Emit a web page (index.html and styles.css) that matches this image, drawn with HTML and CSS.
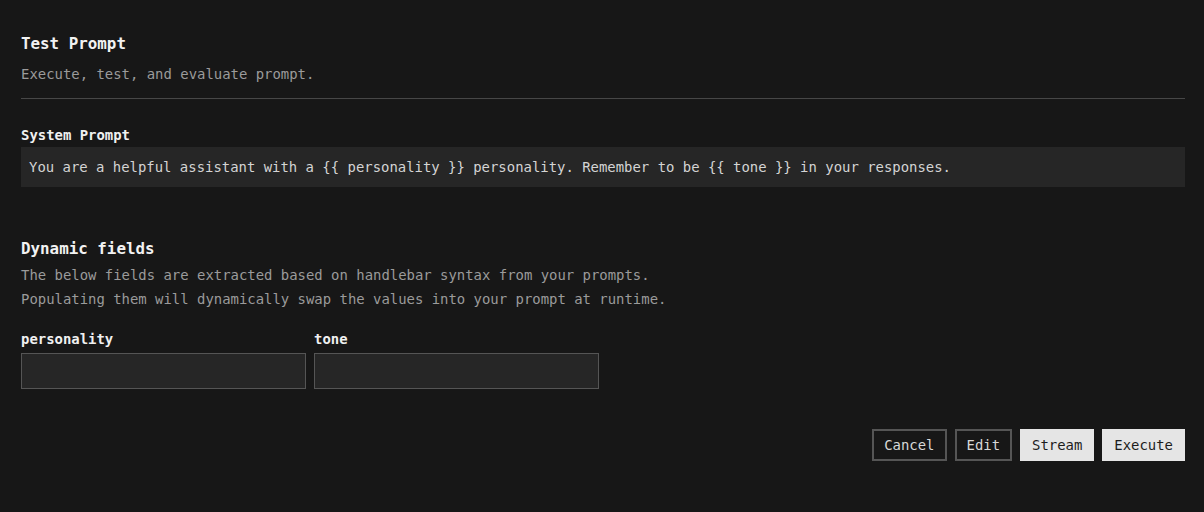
FILE: index.html
```html
<!DOCTYPE html>
<html>
<head>
<meta charset="utf-8">
<link rel="stylesheet" href="styles.css">
</head>
<body>
<div class="page">
  <header class="head">
    <h1 class="title">Test Prompt</h1>
    <p class="subtitle">Execute, test, and evaluate prompt.</p>
  </header>
  <section class="system">
    <div class="label">System Prompt</div>
    <div class="prompt-box">You are a helpful assistant with a {{ personality }} personality. Remember to be {{ tone }} in your responses.</div>
  </section>
  <section class="dynamic">
    <h2 class="section-title">Dynamic fields</h2>
    <p class="desc">The below fields are extracted based on handlebar syntax from your prompts.</p>
    <p class="desc">Populating them will dynamically swap the values into your prompt at runtime.</p>
    <div class="fields">
      <label class="field">
        <span class="label">personality</span>
        <input class="input" type="text">
      </label>
      <label class="field">
        <span class="label">tone</span>
        <input class="input" type="text">
      </label>
    </div>
  </section>
  <div class="actions">
    <button class="btn btn-outline">Cancel</button>
    <button class="btn btn-outline">Edit</button>
    <button class="btn btn-solid">Stream</button>
    <button class="btn btn-solid">Execute</button>
  </div>
</div>
</body>
</html>
```
FILE: styles.css
```css
html, body {
  margin: 0;
  padding: 0;
  background: #171717;
}
body {
  font-family: "DejaVu Sans Mono", "Liberation Mono", monospace;
  font-size: 13.93px;
  color: #e6e6e6;
}
.page {
  padding: 32px 19px 0 21px;
  display: flex;
  flex-direction: column;
}
.head {
  border-bottom: 1px solid #474747;
  padding-bottom: 12px;
}
.title {
  margin: 0;
  font-size: 15.85px;
  line-height: 24px;
  font-weight: 700;
  color: #f2f2f2;
}
.subtitle {
  margin: 6px 0 0;
  line-height: 24px;
  color: #9b9b9b;
  font-size: 13.93px;
}
.system {
  margin-top: 26px;
  display: flex;
  flex-direction: column;
  gap: 2px;
}
.label {
  font-size: 13.93px;
  line-height: 20px;
  font-weight: 700;
  color: #f0f0f0;
}
.prompt-box {
  background: #262626;
  padding: 10px 8px;
  line-height: 20px;
  color: #d4d4d4;
  white-space: nowrap;
}
.dynamic {
  margin-top: 50px;
}
.section-title {
  margin: 0 0 2px;
  font-size: 15.85px;
  line-height: 24px;
  font-weight: 700;
  color: #f2f2f2;
}
.desc {
  margin: 0;
  line-height: 24px;
  color: #9b9b9b;
}
.fields {
  margin-top: 18px;
  display: flex;
  gap: 8px;
}
.field {
  display: flex;
  flex-direction: column;
  gap: 4px;
  width: 285px;
}
.input {
  box-sizing: border-box;
  height: 36px;
  width: 100%;
  margin: 0;
  background: #262626;
  border: 1px solid #555555;
  border-radius: 0;
  color: #e6e6e6;
  font: inherit;
  padding: 0 8px;
  outline: none;
}
.actions {
  margin-top: 40px;
  display: flex;
  justify-content: flex-end;
  gap: 8px;
}
.btn {
  box-sizing: border-box;
  height: 32px;
  padding: 0 12px;
  font-family: inherit;
  font-size: 13.93px;
  border-radius: 0;
  margin: 0;
  cursor: pointer;
}
.btn-outline {
  background: #171717;
  border: 2px solid #555555;
  color: #d8d8d8;
  padding: 0 10px;
}
.btn-solid {
  background: #e5e5e5;
  border: none;
  color: #1c1c1c;
}
```
